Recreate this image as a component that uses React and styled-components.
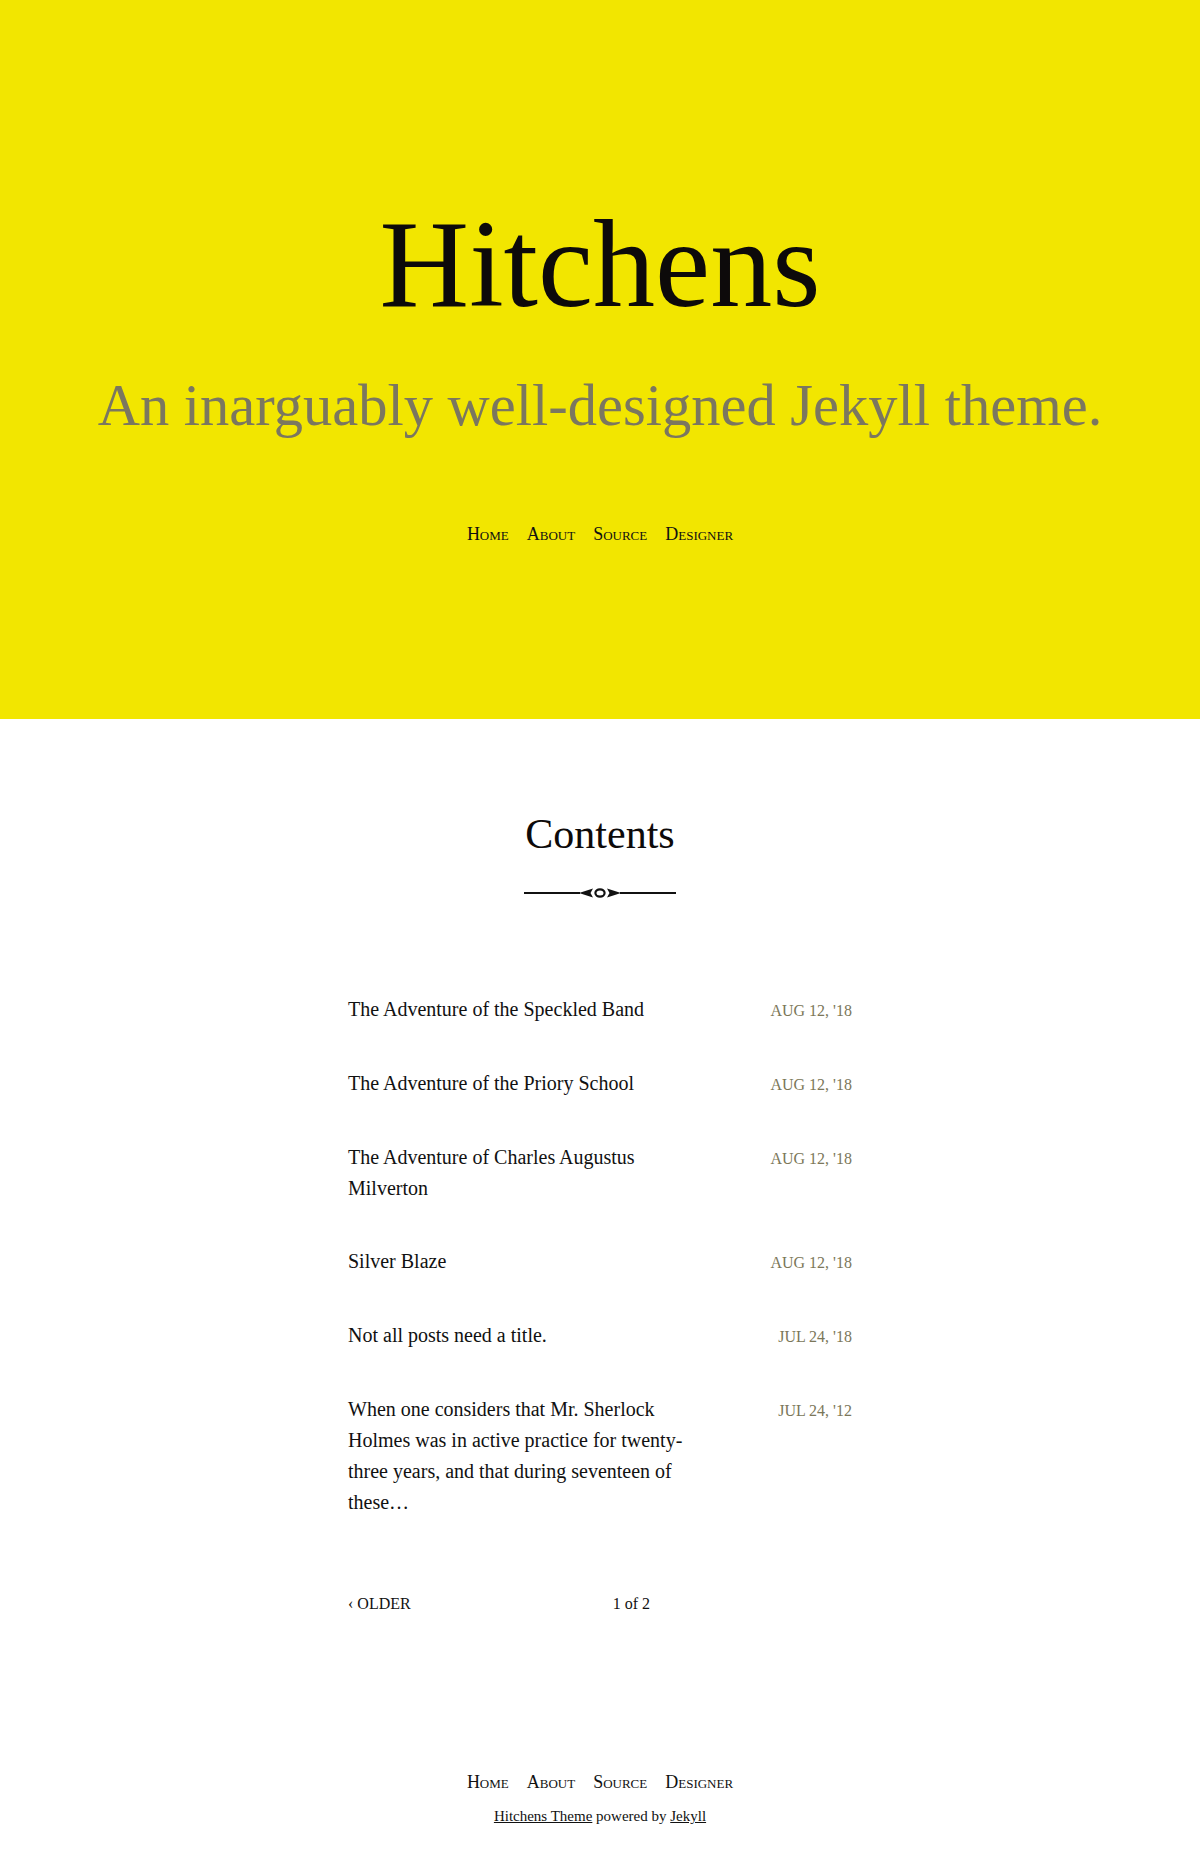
import React from "react";
import styled, { createGlobalStyle } from "styled-components";

const GlobalStyle = createGlobalStyle`
  html, body { margin: 0; padding: 0; background: #fff; }
  body {
    font-family: "Liberation Serif", "Times New Roman", serif;
    color: #111;
    -webkit-font-smoothing: antialiased;
  }
  * { box-sizing: border-box; }
`;

const Header = styled.header`
  background: #f2e600;
  height: 719px;
  padding-top: 203px;
  display: flex;
  flex-direction: column;
  align-items: center;
`;

const SiteTitle = styled.h1`
  margin: 0;
  font-size: 124px;
  line-height: 1;
  font-weight: 400;
  color: #0d0a0a;
`;

const Tagline = styled.p`
  margin: 50px 0 0;
  font-size: 58.5px;
  line-height: 1;
  color: #7b775f;
`;

const Nav = styled.nav`
  display: flex;
  justify-content: center;
  gap: 18px;
  margin-top: ${(p) => p.$top}px;
`;

const NavLink = styled.a`
  font-size: 18px;
  line-height: 1;
  font-variant: small-caps;
  color: #111;
  text-decoration: none;
`;

const Main = styled.main`
  width: 504px;
  margin: 0 auto;
  padding-top: 94px;
  display: flex;
  flex-direction: column;
`;

const SectionTitle = styled.h2`
  margin: 0;
  text-align: center;
  font-size: 42px;
  line-height: 1;
  font-weight: 400;
  color: #0d0a0a;
`;

const Ornament = styled.svg`
  display: block;
  margin: 30px auto 0;
`;

const PostList = styled.ul`
  list-style: none;
  margin: 93px 0 0;
  padding: 0;
  display: flex;
  flex-direction: column;
  gap: 42px;
`;

const PostRow = styled.li`
  display: grid;
  grid-template-columns: 2fr 1fr;
  align-items: baseline;
`;

const PostTitle = styled.a`
  font-size: 20px;
  line-height: 31px;
  color: #111;
  text-decoration: none;
`;

const PostDate = styled.span`
  justify-self: end;
  font-size: 16px;
  line-height: 31px;
  color: #7b7759;
  white-space: nowrap;
`;

const Pagination = styled.div`
  margin-top: 74px;
  display: flex;
  justify-content: space-between;
  align-items: baseline;
  font-size: 16px;
  line-height: 24px;
`;

const PageLink = styled.a`
  color: #111;
  text-decoration: none;
  text-transform: uppercase;
`;

const PageNum = styled.span`
  color: #111;
`;

const Footer = styled.footer`
  padding-top: 157px;
  padding-bottom: 45px;
  display: flex;
  flex-direction: column;
  align-items: center;
`;

const Credit = styled.p`
  margin: 18px 0 0;
  font-size: 15px;
  line-height: 1;
  color: #111;
  & a { color: #111; text-decoration: underline; }
`;

const posts = [
  { title: "The Adventure of the Speckled Band", date: "AUG 12, '18" },
  { title: "The Adventure of the Priory School", date: "AUG 12, '18" },
  { title: "The Adventure of Charles Augustus Milverton", date: "AUG 12, '18" },
  { title: "Silver Blaze", date: "AUG 12, '18" },
  { title: "Not all posts need a title.", date: "JUL 24, '18" },
  {
    title:
      "When one considers that Mr. Sherlock Holmes was in active practice for twenty-three years, and that during seventeen of these…",
    date: "JUL 24, '12",
  },
];

const navItems = ["Home", "About", "Source", "Designer"];

function SiteNav({ top }) {
  return (
    <Nav $top={top}>
      {navItems.map((n) => (
        <NavLink key={n} href="#">
          {n}
        </NavLink>
      ))}
    </Nav>
  );
}

export default function App() {
  return (
    <>
      <GlobalStyle />
      <Header>
        <SiteTitle>Hitchens</SiteTitle>
        <Tagline>An inarguably well-designed Jekyll theme.</Tagline>
        <SiteNav top={89} />
      </Header>
      <Main>
        <SectionTitle>Contents</SectionTitle>
        <Ornament width="152" height="16" viewBox="0 0 152 16">
          <line x1="0" y1="8" x2="56" y2="8" stroke="#111" strokeWidth="2.2" />
          <line x1="96" y1="8" x2="152" y2="8" stroke="#111" strokeWidth="2.2" />
          <path d="M55 8 L69 3.5 L66.5 8 L69 12.5 Z" fill="#111" />
          <path d="M97 8 L83 3.5 L85.5 8 L83 12.5 Z" fill="#111" />
          <ellipse cx="76" cy="8" rx="4.6" ry="3.6" fill="none" stroke="#111" strokeWidth="2.2" />
        </Ornament>
        <PostList>
          {posts.map((p, i) => (
            <PostRow key={i}>
              <PostTitle href="#">{p.title}</PostTitle>
              <PostDate>{p.date}</PostDate>
            </PostRow>
          ))}
        </PostList>
        <Pagination>
          <PageLink href="#">‹ Older</PageLink>
          <PageNum>1 of 2</PageNum>
          <span />
        </Pagination>
      </Main>
      <Footer>
        <SiteNav top={0} />
        <Credit>
          <a href="#">Hitchens Theme</a> powered by <a href="#">Jekyll</a>
        </Credit>
      </Footer>
    </>
  );
}
